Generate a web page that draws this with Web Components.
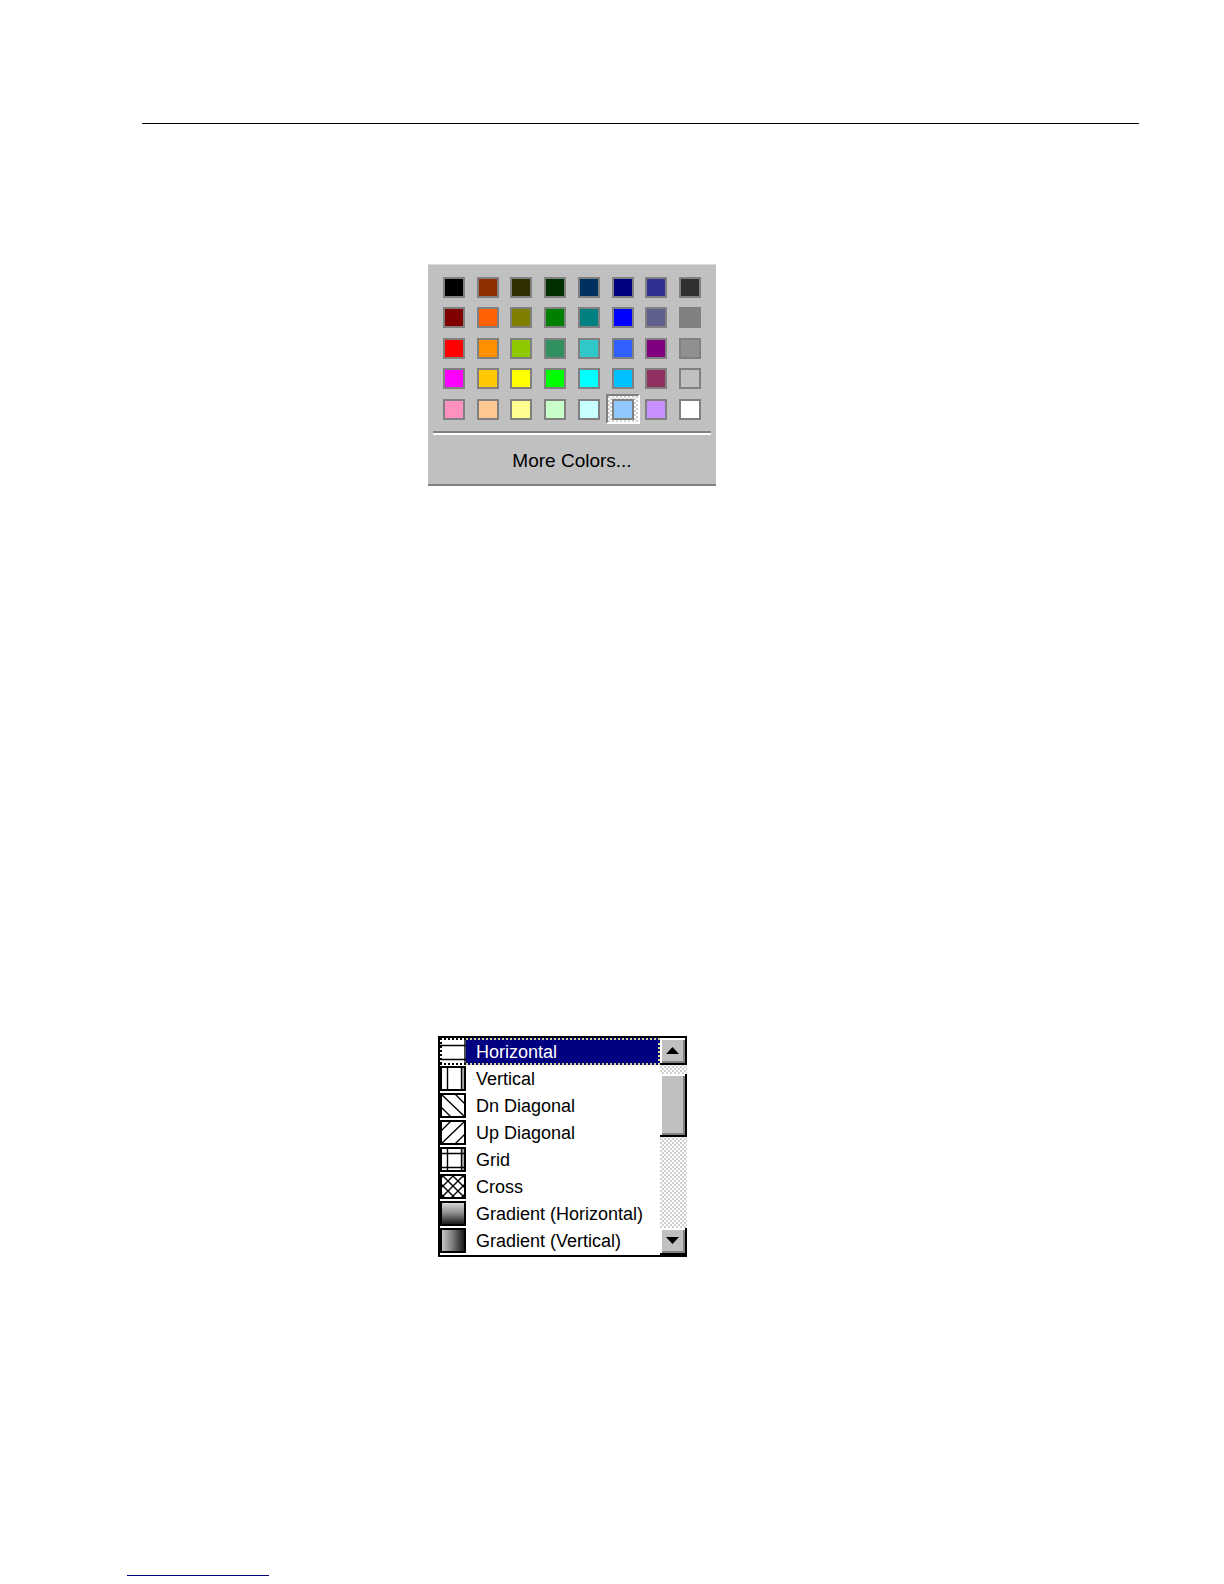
<!DOCTYPE html>
<html lang="en">
<head>
<meta charset="utf-8">
<title>Colors and patterns</title>
<style>
  body { margin: 0; background: #fff; font-family: "Liberation Sans", Arial, sans-serif; color: #000 }
</style>
</head>
<body>
<manual-page>
  <color-palette selected="#90c8ff">More Colors...</color-palette>
  <pattern-list slot="list">
    <pattern-item kind="horizontal" selected>Horizontal</pattern-item>
    <pattern-item kind="vertical">Vertical</pattern-item>
    <pattern-item kind="down">Dn Diagonal</pattern-item>
    <pattern-item kind="up">Up Diagonal</pattern-item>
    <pattern-item kind="grid">Grid</pattern-item>
    <pattern-item kind="cross">Cross</pattern-item>
    <pattern-item kind="gradient-h">Gradient (Horizontal)</pattern-item>
    <pattern-item kind="gradient-v">Gradient (Vertical)</pattern-item>
  </pattern-list>
</manual-page>

<script>
class ManualPage extends HTMLElement {
  constructor() {
    super()
    this.attachShadow({ mode: 'open' }).innerHTML = `
      <style>
        :host { display: flex; flex-direction: column; min-height: 100vh; box-sizing: border-box; padding: 123px 85px 8px 127px }
        hr { border: 0; height: 1px; margin: 0; flex: none }
        .top { background: #000; margin-left: 15px }
        .foot { background: #000080; width: 142px; margin-top: auto }
        .figure { display: flex; padding: 140px 0 0 301px }
        .figure + .figure { padding: 550px 0 0 311px }
      </style>
      <hr class="top">
      <div class="figure"><slot></slot></div>
      <div class="figure"><slot name="list"></slot></div>
      <hr class="foot">
    `
  }
}

class ColorPalette extends HTMLElement {
  static colors = [
    '#000000', '#903000', '#303000', '#003000', '#003060', '#000080', '#303090', '#303030',
    '#800000', '#ff6000', '#808000', '#008000', '#008080', '#0000ff', '#606090', '#808080',
    '#ff0000', '#ff9000', '#90c800', '#309060', '#30c8c8', '#3060ff', '#800080', '#909090',
    '#ff00ff', '#ffc800', '#ffff00', '#00ff00', '#00ffff', '#00c0ff', '#903060', '#c0c0c0',
    '#ff90c0', '#ffc890', '#ffff90', '#c8ffc8', '#c8ffff', '#90c8ff', '#c890ff', '#ffffff'
  ]

  constructor() {
    super()
    this.attachShadow({ mode: 'open' }).innerHTML = `
      <style>
        :host {
          display: block; box-sizing: border-box; width: 288px; padding: 7px 5px 0;
          background: #c0c0c0; border-top: 1px solid #dcdcdc; border-bottom: 2px solid #808080;
        }
        .grid {
          display: grid; grid-template-columns: repeat(8, minmax(0, 1fr)); grid-auto-rows: 30px;
          align-content: space-between; height: 152px; margin: 0 4px;
        }
        button { box-sizing: border-box; font: inherit; color: inherit; background: none; border: 0; padding: 0 }
        .grid button {
          display: flex; align-items: center; justify-content: center; justify-self: center;
          width: 34px; height: 30px;
        }
        .grid i { box-sizing: border-box; flex: none; width: 22px; height: 21px; border: 2px solid #808080; background: var(--color) }
        .grid .selected {
          border: 2px solid; border-color: #808080 #fff #fff #808080;
          background: repeating-conic-gradient(#fff 0 25%, #d0d0d0 0 50%) 0 0 / 4px 4px;
        }
        .more {
          display: block; width: 100%; height: 53px; margin-top: 7px; padding-top: 5px;
          border-top: 2px solid #808080; box-shadow: inset 0 2px #fff; font-size: 19px;
        }
      </style>
      <div class="grid"></div>
      <button class="more"><slot></slot></button>
    `
    const grid = this.shadowRoot.querySelector('.grid')
    for (const color of ColorPalette.colors) {
      const button = document.createElement('button')
      button.setAttribute('aria-label', color)
      button.style.setProperty('--color', color)
      button.className = color === this.getAttribute('selected') ? 'selected' : ''
      button.append(document.createElement('i'))
      button.addEventListener('click', () => this.select(button))
      grid.append(button)
    }
  }

  select(button) {
    this.shadowRoot.querySelector('.selected')?.classList.remove('selected')
    button.classList.add('selected')
  }
}

class PatternItem extends HTMLElement {
  static box = '<path d="M1 1h24v23H1z" stroke-width="2"/>'
  static icons = {
    horizontal: '<path d="M0 7.5h26M0 21.5h26M25 0v25"/><path d="M1 0v25M0 1h26" stroke-width="2" stroke-dasharray="2 2"/>',
    vertical: '<path d="M22 2h2v22h-2z" fill="#aaa" stroke="none"/><path d="M7.5 0v25M21.5 0v25"/>' + PatternItem.box,
    down: '<path d="M1 1l24 23M1 14l10 10M15 1l10 10"/>' + PatternItem.box,
    up: '<path d="M1 24L25 1M1 11L11 1M15 24l10-10"/>' + PatternItem.box,
    grid: '<path d="M22 2h2v22h-2z" fill="#aaa" stroke="none"/><path d="M7.5 0v25M21.5 0v25M0 6.5h26M0 20.5h26"/>' + PatternItem.box,
    cross: '<path d="M2 1l23 23M12 1l13 13M22 1l3 3M1 10l14 14M1 20l4 4M24 1L1 24M14 1L1 14M4 1L1 4M25 10L11 24M25 20l-4 4"/>' + PatternItem.box,
    'gradient-h': '<linearGradient id="g" x2="0" y2="1"><stop stop-color="#ddd"/><stop offset=".5" stop-color="#888"/><stop offset="1" stop-color="#111"/></linearGradient><path d="M1 1h24v23H1z" fill="url(#g)" stroke-width="2"/>',
    'gradient-v': '<linearGradient id="g"><stop stop-color="#ccc"/><stop offset=".5" stop-color="#777"/><stop offset="1" stop-color="#111"/></linearGradient><path d="M1 1h24v23H1z" fill="url(#g)" stroke-width="2"/>'
  }

  constructor() {
    super()
    this.attachShadow({ mode: 'open' }).innerHTML = `
      <style>
        :host { display: flex; height: 27px; font-size: 18px; line-height: 24px }
        svg { flex: none; width: 26px; height: 25px; margin-top: 1px; fill: none; stroke: #000; stroke-width: 1.4 }
        span {
          flex: 1; box-sizing: border-box; height: 27px; padding-left: 10px; white-space: nowrap;
          border: 2px solid transparent; border-left: 0;
        }
        :host([selected]) span { background: #000080; color: #fff; border-style: dotted; border-color: #d8d890 }
        :host([selected]) svg { margin-top: 0; border-bottom: 2px dotted #000 }
      </style>
      <svg viewBox="0 0 26 25" aria-hidden="true">${PatternItem.icons[this.getAttribute('kind')]}</svg>
      <span><slot></slot></span>
    `
    this.setAttribute('role', 'option')
    this.setAttribute('aria-selected', this.hasAttribute('selected'))
  }
}

class PatternList extends HTMLElement {
  constructor() {
    super()
    this.attachShadow({ mode: 'open' }).innerHTML = `
      <style>
        :host { display: flex; box-sizing: border-box; width: 249px; border: 2px solid #000; border-right: 0; background: #fff }
        .items { flex: 1; height: 217px; overflow: hidden }
        .bar {
          display: flex; flex-direction: column; width: 27px;
          background: repeating-conic-gradient(#fff 0 25%, #d0d0d0 0 50%) 0 0 / 4px 4px;
        }
        button, .thumb {
          box-sizing: border-box; width: 27px; padding: 0; background: #c0c0c0; border: 0 solid #000;
          border-width: 0 2px 2px 0; box-shadow: inset 2px 2px #fff, inset -2px -2px #808080;
        }
        button { display: flex; align-items: center; justify-content: center; height: 27px }
        svg { width: 13px; height: 7px }
        .thumb { height: 63px; margin-top: 9px }
        .down { margin-top: auto }
      </style>
      <div class="items" role="listbox" aria-label="Pattern"><slot></slot></div>
      <div class="bar">
        <button aria-label="Scroll up"><svg viewBox="0 0 13 7"><path d="M0 7h13L6.5 0z"/></svg></button>
        <div class="thumb"></div>
        <button class="down" aria-label="Scroll down"><svg viewBox="0 0 13 7"><path d="M0 0h13L6.5 7z"/></svg></button>
      </div>
    `
    this.addEventListener('click', (e) => {
      const item = e.target.closest('pattern-item')
      if (item) this.select(item)
    })
  }

  select(selected) {
    for (const item of this.querySelectorAll('pattern-item')) {
      item.toggleAttribute('selected', item === selected)
      item.setAttribute('aria-selected', item === selected)
    }
  }
}

customElements.define('manual-page', ManualPage)
customElements.define('color-palette', ColorPalette)
customElements.define('pattern-item', PatternItem)
customElements.define('pattern-list', PatternList)
</script>
</body>
</html>
